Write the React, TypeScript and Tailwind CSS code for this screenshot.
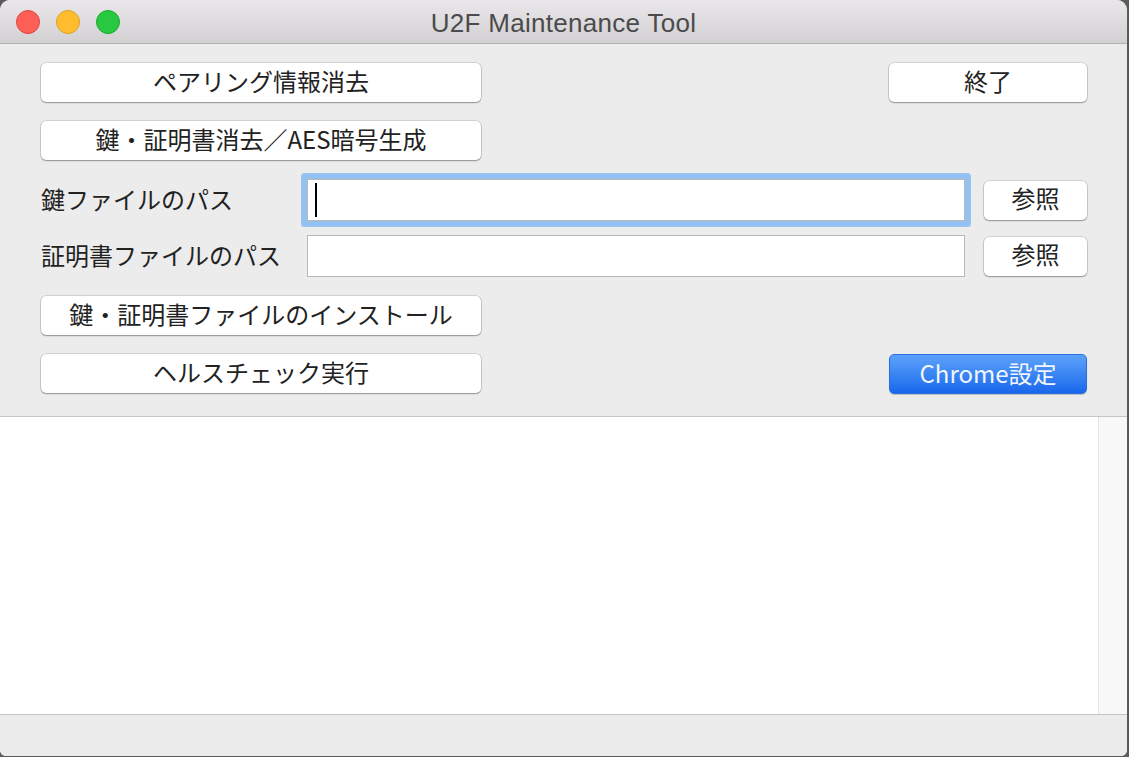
const jp = "font-['Noto_Sans_CJK_JP','Noto_Sans',sans-serif]";

function MacButton({ label, className = "" }: { label: string; className?: string }) {
  return (
    <button
      className={`flex h-[39px] items-center justify-center rounded-[5px] bg-white pb-[4px] text-[24px] leading-none text-[#222] shadow-[0_0_0_0.5px_rgba(0,0,0,0.22),0_1px_1.5px_rgba(0,0,0,0.3)] ${className}`}
    >
      {label}
    </button>
  );
}

function PathRow({ label, focused }: { label: string; focused?: boolean }) {
  return (
    <div className="flex items-center">
      <div className="w-[266px] pb-[3px] text-[24px] leading-none text-[#222]">{label}</div>
      <div
        className={`flex h-[42px] w-[658px] items-center border border-[#b8b8b8] bg-white pl-[7px] ${
          focused ? "rounded-[1px] shadow-[0_0_0_6px_#95c1f1]" : ""
        }`}
      >
        {focused && <div className="h-[34px] w-[2px] bg-black" />}
      </div>
      <MacButton label="参照" className="ml-auto w-[103px]" />
    </div>
  );
}

export default function App() {
  return (
    <div className={`h-[757px] w-[1129px] bg-[#5b5b5b] ${jp}`}>
      <div className="flex h-[756px] w-[1127px] flex-col overflow-hidden rounded-t-[10px] rounded-b-[6px] bg-[#ececec]">
        {/* title bar */}
        <div className="relative flex h-[44px] shrink-0 items-center border-b border-[#b1b1b1] bg-gradient-to-b from-[#e9e7e9] to-[#d2d0d2]">
          <div className="flex gap-[16px] pl-[16px]">
            <span className="h-[24px] w-[24px] rounded-full border border-[#e1443e] bg-[#fe5f57]" />
            <span className="h-[24px] w-[24px] rounded-full border border-[#dea123] bg-[#febc2e]" />
            <span className="h-[24px] w-[24px] rounded-full border border-[#1aab29] bg-[#28c840]" />
          </div>
          <div className="absolute inset-x-0 top-[8px] text-center font-['Liberation_Sans',sans-serif] text-[26px] leading-[30px] tracking-[0.3px] text-[#4b4b4b]">
            U2F Maintenance Tool
          </div>
        </div>

        {/* controls */}
        <div className="flex h-[372px] shrink-0 flex-col pl-[41px] pr-[40px] pt-[19px]">
          <div className="flex justify-between">
            <MacButton label="ペアリング情報消去" className="w-[440px]" />
            <MacButton label="終了" className="w-[198px]" />
          </div>
          <div className="mt-[19px] flex">
            <MacButton label="鍵・証明書消去／AES暗号生成" className="w-[440px]" />
          </div>
          <div className="mt-[19px]">
            <PathRow label="鍵ファイルのパス" focused />
          </div>
          <div className="mt-[14px]">
            <PathRow label="証明書ファイルのパス" />
          </div>
          <div className="mt-[19px] flex">
            <MacButton label="鍵・証明書ファイルのインストール" className="w-[440px]" />
          </div>
          <div className="mt-[19px] flex justify-between">
            <MacButton label="ヘルスチェック実行" className="w-[440px]" />
            <button className="flex h-[40px] w-[198px] items-center justify-center rounded-[5px] border border-[#2a6ee0] bg-gradient-to-b from-[#5ca2fa] to-[#1767ec] pb-[3px] text-[24px] leading-none text-[#f2f6ff] shadow-[0_1px_1px_rgba(0,0,0,0.2)]">
              Chrome設定
            </button>
          </div>
        </div>

        {/* log area */}
        <div className="flex h-[298px] shrink-0 border-t border-[#c6c6c6] bg-white">
          <div className="flex-1" />
          <div className="w-[29px] border-l border-[#e4e4e4] bg-[#f8f8f8]" />
        </div>

        {/* status bar */}
        <div className="flex-1 border-t border-[#c4c4c4] bg-[#ececec]" />
      </div>
    </div>
  );
}
